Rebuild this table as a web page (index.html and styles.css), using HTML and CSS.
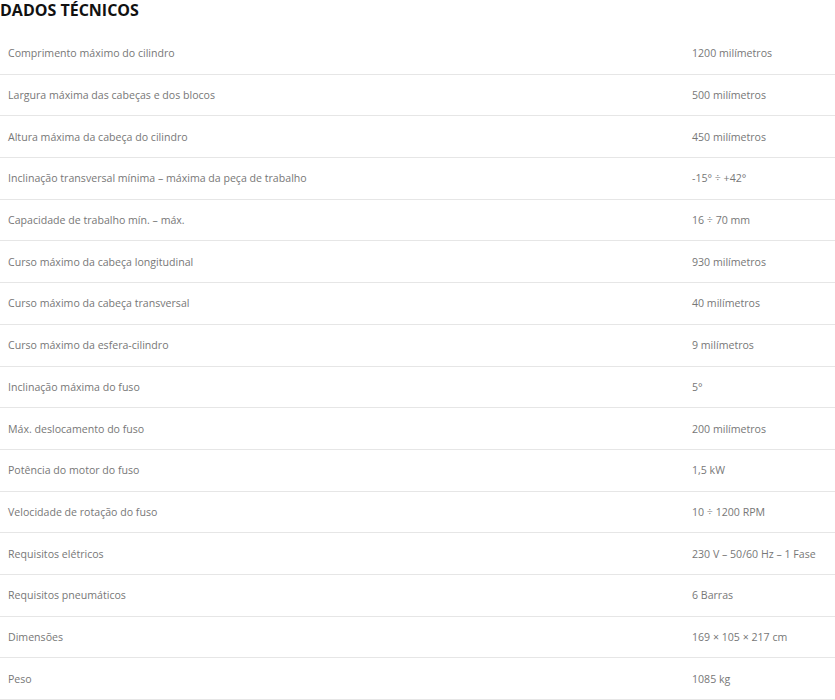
FILE: index.html
```html
<!DOCTYPE html>
<html lang="pt">
<head>
    <meta charset="UTF-8">
    <meta name="viewport" content="width=device-width, initial-scale=1.0">
    <title>Dados técnicos</title>
    <link rel="stylesheet" href="styles.css">
</head>
<body>
    <h2 class="specs-title">DADOS TÉCNICOS</h2>

    <!-- Technical data -->
    <div class="specs">
        <div class="spec-row"><span class="spec-name">Comprimento máximo do cilindro</span><span class="spec-value">1200 milímetros</span></div>
        <div class="spec-row"><span class="spec-name">Largura máxima das cabeças e dos blocos</span><span class="spec-value">500 milímetros</span></div>
        <div class="spec-row"><span class="spec-name">Altura máxima da cabeça do cilindro</span><span class="spec-value">450 milímetros</span></div>
        <div class="spec-row"><span class="spec-name">Inclinação transversal mínima – máxima da peça de trabalho</span><span class="spec-value">-15° ÷ +42°</span></div>
        <div class="spec-row"><span class="spec-name">Capacidade de trabalho mín. – máx.</span><span class="spec-value">16 ÷ 70 mm</span></div>
        <div class="spec-row"><span class="spec-name">Curso máximo da cabeça longitudinal</span><span class="spec-value">930 milímetros</span></div>
        <div class="spec-row"><span class="spec-name">Curso máximo da cabeça transversal</span><span class="spec-value">40 milímetros</span></div>
        <div class="spec-row"><span class="spec-name">Curso máximo da esfera-cilindro</span><span class="spec-value">9 milímetros</span></div>
        <div class="spec-row"><span class="spec-name">Inclinação máxima do fuso</span><span class="spec-value">5°</span></div>
        <div class="spec-row"><span class="spec-name">Máx. deslocamento do fuso</span><span class="spec-value">200 milímetros</span></div>
        <div class="spec-row"><span class="spec-name">Potência do motor do fuso</span><span class="spec-value">1,5 kW</span></div>
        <div class="spec-row"><span class="spec-name">Velocidade de rotação do fuso</span><span class="spec-value">10 ÷ 1200 RPM</span></div>
        <div class="spec-row"><span class="spec-name">Requisitos elétricos</span><span class="spec-value">230 V – 50/60 Hz – 1 Fase</span></div>
        <div class="spec-row"><span class="spec-name">Requisitos pneumáticos</span><span class="spec-value">6 Barras</span></div>
        <div class="spec-row"><span class="spec-name">Dimensões</span><span class="spec-value">169 × 105 × 217 cm</span></div>
        <div class="spec-row"><span class="spec-name">Peso</span><span class="spec-value">1085 kg</span></div>
    </div>
</body>
</html>
```

FILE: styles.css
```css
body {
    font-family: 'Open Sans', sans-serif;
    background-color: #fff;
    margin: 0;
    overflow: hidden;
}
.specs-title {
    margin: 0;
    padding-top: 1px;
    height: 32px;
    font-size: 16px;
    font-weight: 700;
    line-height: 18px;
    color: #111;
}
.spec-row {
    display: flex;
    align-items: center;
    height: 41.7px;
    box-sizing: border-box;
    border-bottom: 1.5px solid #e6e6e6;
    font-size: 10.6px;
    color: #777;
}
.spec-name {
    flex: 1;
    padding-left: 8px;
}
.spec-value {
    width: 143px;
}
```
